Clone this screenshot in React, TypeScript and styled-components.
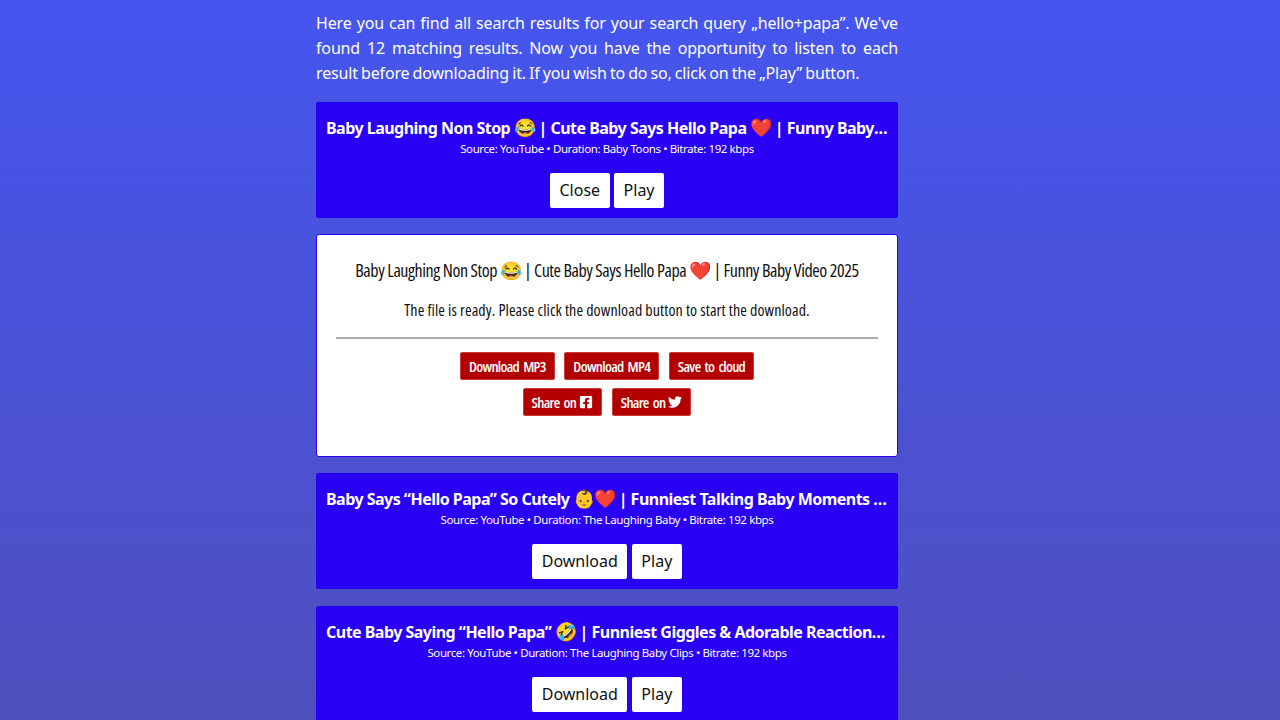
import React from "react";
import styled, { createGlobalStyle } from "styled-components";
import { FaFacebookSquare, FaTwitter } from "react-icons/fa";

const GlobalStyle = createGlobalStyle`
    html, body {
        margin: 0;
        height: 720px;
        overflow: hidden;
    }
    body {
        background: linear-gradient(180deg, #4555ef 0%, #4f4fbd 100%);
        font-family: "Noto Sans", "Open Sans", sans-serif;
    }
`;

const Page = styled.div`
    width: 582px;
    margin-left: 316px;
    padding-top: 11px;
`;

const Intro = styled.p`
    margin: 0 0 16px;
    color: white;
    font-size: 16px;
    line-height: 25px;
    letter-spacing: -0.15px;
    word-spacing: -0.9px;
`;

const IntroLine = styled.span<{ $last?: boolean }>`
    display: block;
    text-align: ${({ $last }) => ($last ? "left" : "justify")};
    text-align-last: ${({ $last }) => ($last ? "left" : "justify")};
`;

const ResultBox = styled.div`
    background-color: #2a00f5;
    border-radius: 2px;
    height: 116px;
    margin-bottom: 17px;
    padding: 14px 10px 0;
    box-sizing: border-box;
    text-align: center;
    color: white;
`;

const ResultTitle = styled.div`
    font-size: 16px;
    font-weight: 700;
    line-height: 24px;
    letter-spacing: -0.52px;
    white-space: nowrap;
    overflow: hidden;
    text-overflow: ellipsis;
`;

const Emoji = styled.span`
    font-size: 18px;
    line-height: 1;
    letter-spacing: -1px;
`;

const ResultMeta = styled.div`
    font-size: 11.5px;
    line-height: 18px;
    letter-spacing: -0.39px;
`;

const ButtonRow = styled.div`
    display: flex;
    justify-content: center;
    gap: 4.5px;
    margin-top: 15px;
`;

const WhiteButton = styled.button`
    height: 35px;
    padding: 0 9.5px 2px;
    background-color: white;
    color: #111;
    border: none;
    border-radius: 2px;
    font-family: inherit;
    font-size: 16px;
    cursor: pointer;
`;

const DetailBox = styled.div`
    background-color: white;
    border: 1px solid #2a00f0;
    border-radius: 3px;
    height: 223px;
    margin: -1px 0 16px;
    padding: 23px 19px 0;
    box-sizing: border-box;
    text-align: center;
    color: #111;
    font-family: "Open Sans", "Noto Sans", sans-serif;
    font-stretch: 75%;
    font-weight: 500;
`;

const DetailTitle = styled.div`
    font-size: 18px;
    line-height: 24px;
    letter-spacing: -0.42px;
    white-space: nowrap;
`;

const DetailText = styled.div`
    font-size: 16px;
    line-height: 24px;
    letter-spacing: 0.1px;
    margin-top: 16px;
    white-space: nowrap;
`;

const Divider = styled.hr`
    border: none;
    height: 2px;
    background-color: #aaa;
    margin: 15px 0 13px;
`;

const RedRow = styled.div`
    display: flex;
    justify-content: center;
    gap: 9.5px;
    margin-bottom: 8px;
`;

const RedButton = styled.a`
    display: inline-flex;
    align-items: center;
    gap: 3px;
    height: 28px;
    padding: 0 8px;
    box-sizing: border-box;
    background-color: #b30000;
    border: 1px solid #c93a3a;
    border-radius: 2px;
    color: white;
    font-size: 15px;
    font-weight: 600;
    letter-spacing: -0.7px;
    word-spacing: 2px;
    cursor: pointer;
`;

const results = [
    {
        title: ["Baby Laughing Non Stop ", "😂", " | Cute Baby Says Hello Papa ", "❤️", " | Funny Baby Video 2025"],
        channel: "Baby Toons",
        action: "Close",
    },
    {
        title: ["Baby Says “Hello Papa” So Cutely ", "👶❤️", " | Funniest Talking Baby Moments 2025"],
        channel: "The Laughing Baby",
        action: "Download",
    },
    {
        title: ["Cute Baby Saying “Hello Papa” ", "🤣", " | Funniest Giggles & Adorable Reactions 2025"],
        channel: "The Laughing Baby Clips",
        action: "Download",
    },
];

function Result({ title, channel, action }: { title: string[]; channel: string; action: string }) {
    return (
        <ResultBox>
            <ResultTitle>
                {title.map((part, i) => (i % 2 ? <Emoji key={i}>{part}</Emoji> : part))}
            </ResultTitle>
            <ResultMeta>Source: YouTube • Duration: {channel} • Bitrate: 192 kbps</ResultMeta>
            <ButtonRow>
                <WhiteButton>{action}</WhiteButton>
                <WhiteButton>Play</WhiteButton>
            </ButtonRow>
        </ResultBox>
    );
}

export default function App() {
    return (
        <Page>
            <GlobalStyle />
            <Intro>
                <IntroLine>Here you can find all search results for your search query „hello+papa”. We've</IntroLine>
                <IntroLine>found 12 matching results. Now you have the opportunity to listen to each</IntroLine>
                <IntroLine $last>result before downloading it. If you wish to do so, click on the „Play” button.</IntroLine>
            </Intro>
            <Result {...results[0]} />
            <DetailBox>
                <DetailTitle>Baby Laughing Non Stop 😂 | Cute Baby Says Hello Papa ❤️ | Funny Baby Video 2025</DetailTitle>
                <DetailText>The file is ready. Please click the download button to start the download.</DetailText>
                <Divider />
                <RedRow>
                    <RedButton>Download MP3</RedButton>
                    <RedButton>Download MP4</RedButton>
                    <RedButton>Save to cloud</RedButton>
                </RedRow>
                <RedRow>
                    <RedButton>Share on <FaFacebookSquare size={14} /></RedButton>
                    <RedButton>Share on <FaTwitter size={14} /></RedButton>
                </RedRow>
            </DetailBox>
            <Result {...results[1]} />
            <Result {...results[2]} />
        </Page>
    );
}
